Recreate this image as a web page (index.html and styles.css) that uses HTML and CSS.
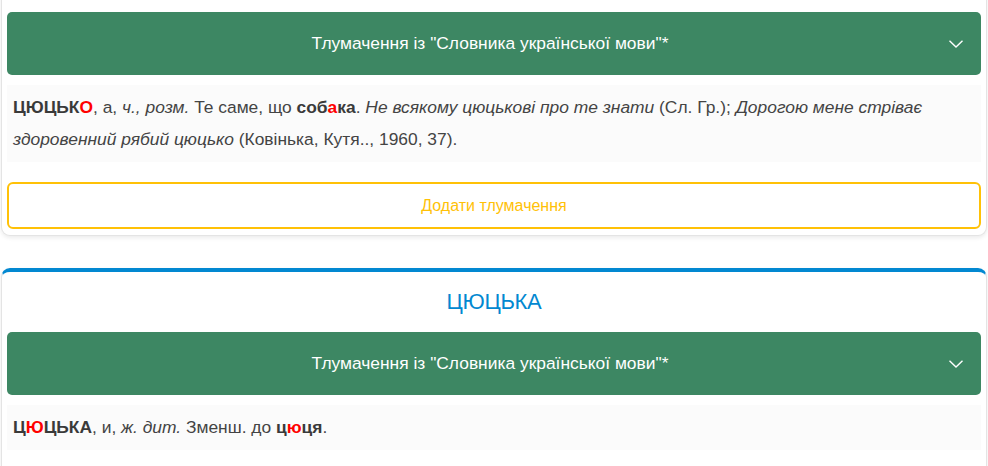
FILE: index.html
```html
<!DOCTYPE html>
<html lang="uk">
<head>
  <meta charset="UTF-8" />
  <meta name="viewport" content="width=device-width, initial-scale=1" />
  <title>ЦЮЦЬКО, ЦЮЦЬКА — тлумачення</title>
  <link rel="stylesheet" href="styles.css">
</head>
<body>

  <div class="slova">

    <div class="slovo slovo-pershe">
      <div class="dzherelo">
        <span class="dzherelo-tekst">Тлумачення із "Словника української мови"*</span>
        <svg class="strilka" width="14" height="8" viewBox="0 0 14 8"><path d="M0.5 0.8 L7 7 L13.5 0.8" fill="none" stroke="#fff" stroke-width="1.4"/></svg>
      </div>
      <div class="tlumachennya">
        <b>ЦЮЦЬК<span class="nagolos">О</span></b>, а, <i>ч., розм.</i> Те саме, що <b>соб<span class="nagolos">а</span>ка</b>. <i>Не всякому цюцькові про те знати</i> (Сл. Гр.); <i>Дорогою мене стріває здоровенний рябий цюцько</i> (Ковінька, Кутя.., 1960, 37).
      </div>
      <button class="dodaty">Додати тлумачення</button>
    </div>

    <div class="slovo">
      <h2 class="slovo-nazva">ЦЮЦЬКА</h2>
      <div class="dzherelo">
        <span class="dzherelo-tekst">Тлумачення із "Словника української мови"*</span>
        <svg class="strilka" width="14" height="8" viewBox="0 0 14 8"><path d="M0.5 0.8 L7 7 L13.5 0.8" fill="none" stroke="#fff" stroke-width="1.4"/></svg>
      </div>
      <div class="tlumachennya">
        <b>Ц<span class="nagolos">Ю</span>ЦЬКА</b>, и, <i>ж. дит.</i> Зменш. до <b>ц<span class="nagolos">ю</span>ця</b>.
      </div>
      <button class="dodaty">Додати тлумачення</button>
    </div>

  </div>

</body>
</html>
```

FILE: styles.css
```css
body {
  font-family: "Liberation Sans", Arial, sans-serif;
  background: #fff;
  margin: 0;
  color: #444;
}
.slova {
  margin: 0 1px;
}
.slovo {
  background: #fff;
  border: 1px solid #e4e4e4;
  border-top: 4px solid #0288d1;
  border-radius: 9px;
  padding: 0 5px 6px;
  margin-bottom: 32px;
  box-shadow: 0 2px 4px rgba(0,0,0,0.08);
}
/* сторінка прокручена, верх першої картки за екраном */
.slovo-pershe {
  margin-top: -40px;
  padding-top: 48px;
}
.slovo-nazva {
  margin: 0;
  padding: 17px 0;
  font-size: 22px;
  line-height: 26px;
  font-weight: normal;
  text-align: center;
  color: #0288d1;
  letter-spacing: -0.3px;
}
.dzherelo {
  display: flex;
  align-items: center;
  background: #3d8763;
  color: #fff;
  border-radius: 5px;
  padding: 22px 18px 22px 24px;
  font-size: 17.4px;
  line-height: 19px;
}
.dzherelo-tekst {
  flex: 1;
  text-align: center;
}
.strilka {
  display: block;
}
.tlumachennya {
  margin-top: 10px;
  background: #fbfbfb;
  padding: 6px 6px 7px;
  font-size: 17.4px;
  line-height: 32px;
}
.tlumachennya b {
  color: #3a3a3a;
}
.nagolos {
  color: #ff0000;
}
.dodaty {
  display: block;
  width: 100%;
  margin-top: 20px;
  background: #fff;
  border: 2px solid #ffc107;
  border-radius: 6px;
  color: #ffc107;
  font-family: inherit;
  font-size: 16px;
  line-height: 19px;
  padding: 12px;
  cursor: pointer;
}
.dodaty:hover {
  background: #fffbea;
}
```
